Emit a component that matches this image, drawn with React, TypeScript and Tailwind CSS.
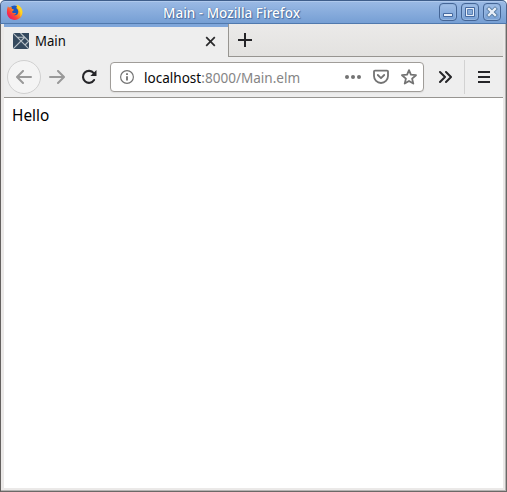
import React from 'react';

function FirefoxLogo() {
  return (
    <svg width="17" height="17" viewBox="0 0 17 17" className="block shrink-0">
      <defs>
        <linearGradient id="flame" x1="0.85" y1="0.1" x2="0.15" y2="0.8">
          <stop offset="0" stopColor="#ffe326" />
          <stop offset="0.4" stopColor="#ff9a1c" />
          <stop offset="0.75" stopColor="#ff4038" />
          <stop offset="1" stopColor="#ee2060" />
        </linearGradient>
      </defs>
      <circle cx="8.4" cy="7.4" r="6" fill="#1c57bd" />
      <path d="M1.9 2.2 3.2 3.8C4.2 3 5 3 5.8 3.3 5.4 4 5.6 4.7 6.3 5 8 5.3 8.5 6 7 6.7 6 7.4 5.9 8.3 6.7 8.8 7.8 9.6 9.3 8.5 10 9.3 9.5 10.4 8.3 10.9 7.3 10.8 9.8 12.3 12.5 10.6 12.3 7.6 12.2 5.6 11 4.8 10.2 4.1 10.9 3.1 11.2 2 10.6.8c3.3 1 5.9 3.8 5.9 7.5 0 4.3-3.3 7.6-7.7 7.6-4.6 0-7.9-3.3-7.9-7.7C.9 6 1.2 4 1.9 2.2Z" fill="url(#flame)" />
      <path d="M10.6.8c3.2 1 5.6 3.8 5.6 7 .1 2-1 4.2-1.9 5.1.6-3 .2-5.6-1.4-7.5C12.2 4.5 11.3 3 10.6.8Z" fill="#ffd823" />
    </svg>
  );
}

function ElmIcon() {
  return (
    <svg width="16" height="16" viewBox="0 0 16 16" className="block shrink-0">
      <path fill="#34495e" d="M0 0h16v16H0z" />
      <path d="M0 0 16 16M0 16 12 4M7.5 0 16 8.5M4.3 4.3h7.5M12 12l4-4" fill="none" stroke="#b9c2c8" strokeWidth="1.1" />
    </svg>
  );
}

function WindowButton({ kind }: { kind: 'min' | 'max' | 'close' }) {
  return (
    <button className="block h-[18px] w-[18px] rounded-[4px] border border-[#446596] bg-linear-to-b from-[#a0bee7] to-[#77a0d5] shadow-[inset_0_0_0_1px_#94b5df]">
      <svg width="16" height="16" viewBox="0 0 16 16" className="block">
        {kind === 'min' && <path d="M3.5 9.5h9v3h-9z" fill="#eaf0f8" stroke="#45699f" />}
        {kind === 'max' && (
          <g>
            <path d="M3.5 3.5h9v9h-9z" fill="#e6edf7" stroke="#45699f" />
            <path d="M5.5 5.5h5v5h-5z" fill="#86abd9" stroke="#5c82b7" />
          </g>
        )}
        {kind === 'close' && (
          <g fill="none" strokeLinecap="square">
            <path d="m5 5 6 6m0-6-6 6" stroke="#55799f" strokeWidth="4" />
            <path d="m5 5 6 6m0-6-6 6" stroke="#e9eff8" strokeWidth="2.4" />
          </g>
        )}
      </svg>
    </button>
  );
}

function TitleBar() {
  return (
    <header className="relative flex h-6 shrink-0 items-center rounded-t-[5px] border border-t-[#3f5e8b] border-r-[#4a6289] border-b-[#5079ad] border-l-[#4a6289] bg-linear-to-b from-[#9bbae5] to-[#769fd4] pr-[5px] pl-[5px] shadow-[inset_0_1px_0_#afc9ed]">
      <FirefoxLogo />
      <h1 className="ml-[140px] w-[142px] origin-left scale-x-[0.966] pt-px text-[14px] leading-[22px] font-medium whitespace-nowrap text-white [text-shadow:0_0_1px_#365b91,1px_1px_1px_#456ba2]">
        Main - Mozilla Firefox
      </h1>
      <div className="ml-auto flex gap-1">
        <WindowButton kind="min" />
        <WindowButton kind="max" />
        <WindowButton kind="close" />
      </div>
    </header>
  );
}

function TabStrip() {
  return (
    <div className="flex h-[33px] shrink-0">
      <div className="flex w-[224px] items-center border-t-[3px] border-[#7fa6da] bg-[#eeeeee] pr-[12px] pb-[2px] pl-[9px]">
        <ElmIcon />
        <span className="ml-[6px] text-[14px] leading-5">
          <span className="inline-block origin-left scale-x-[0.94]">Main</span>
        </span>
        <svg width="11" height="11" viewBox="0 0 11 11" className="ml-auto">
          <path d="m1.2 1.2 8.6 8.6m0-8.6L1.2 9.8" fill="none" stroke="#29292b" strokeWidth="1.7" />
        </svg>
      </div>
      <div className="flex flex-1 border-b border-l border-[#979591] bg-linear-to-b from-[#ebeae9] to-[#e3e2e0] pt-[9px] pl-[9px]">
        <svg width="14" height="14" viewBox="0 0 14 14">
          <path d="M7 0v14M0 7h14" fill="none" stroke="#242427" strokeWidth="2" />
        </svg>
      </div>
    </div>
  );
}

function AddressBar() {
  return (
    <div className="ml-[13px] flex h-[30px] w-[314px] shrink-0 items-center rounded-[4px] border border-[#a09d99] bg-white pr-[6px] pl-[9px] shadow-[0_1px_1px_#dedede]">
      <svg width="14" height="14" viewBox="0 0 14 14" fill="none" className="shrink-0">
        <circle cx="7" cy="7" r="6.4" stroke="#737373" strokeWidth="1.15" />
        <path d="M7 6.2v4.4M7 3.2v1.7" stroke="#686868" strokeWidth="1.7" />
      </svg>
      <div className="ml-[10px] w-[191px] pt-[2px] text-[14px] leading-5 whitespace-nowrap text-[#858585]">
        <span className="inline-block origin-left scale-x-[0.968]"><span className="text-[#080808]">localhost</span>:8000/Main.elm</span>
      </div>
      <svg width="16" height="16" viewBox="0 0 16 16" className="ml-[10px] shrink-0" fill="#737373">
        <circle cx="2" cy="8" r="2" /><circle cx="8" cy="8" r="2" /><circle cx="14" cy="8" r="2" />
      </svg>
      <svg width="16" height="16" viewBox="0 0 16 16" className="ml-[12px] shrink-0" fill="none" stroke="#737373" strokeWidth="1.8" strokeLinecap="round" strokeLinejoin="round">
        <path d="M2 1.6h12a1 1 0 0 1 1 1V7a7 7 0 0 1-14 0V2.6a1 1 0 0 1 1-1Z" />
        <path d="m4.8 6 3.2 3.2L11.2 6" />
      </svg>
      <svg width="16" height="16" viewBox="0 0 16 16" className="ml-[12px] shrink-0" fill="none" stroke="#737373" strokeWidth="1.8" strokeLinejoin="round">
        <path d="m8 1.2 1.9 4.5 5.1.5-3.9 3.4 1.2 5L8 12l-4.3 2.6 1.2-5L1 6.2l5.1-.5Z" />
      </svg>
    </div>
  );
}

function Toolbar() {
  return (
    <nav className="flex h-[41px] shrink-0 items-center border-b border-[#979591] bg-[#eeeeee] pl-[3px] text-[#252528]">
      <button className="flex h-[34px] w-[34px] shrink-0 items-center justify-center rounded-full border border-[#d0d0d0] bg-[#f4f4f4]">
        <svg width="16" height="14" viewBox="0 0 16 14" fill="none" stroke="#999" strokeWidth="2" strokeLinecap="round" strokeLinejoin="round">
          <path d="M15 7H1.3M7 1 1 7l6 6" />
        </svg>
      </button>
      <svg width="16" height="14" viewBox="0 0 16 14" className="ml-[8px] shrink-0" fill="none" stroke="#999" strokeWidth="2" strokeLinecap="round" strokeLinejoin="round">
        <path d="M1 7h13.7M9 1l6 6-6 6" />
      </svg>
      <svg width="16" height="16" viewBox="0 0 16 16" className="ml-[16px] shrink-0" fill="none" stroke="currentColor" strokeWidth="2.1">
        <path d="M12.7 4.1A6 6 0 1 0 13.1 11" strokeLinecap="round" />
        <path d="M15.5 1v6H9.3Z" fill="currentColor" stroke="none" />
      </svg>
      <AddressBar />
      <svg width="14" height="14" viewBox="0 0 14 14" className="ml-[14px] shrink-0" fill="none" stroke="currentColor" strokeWidth="2" strokeLinecap="round" strokeLinejoin="round">
        <path d="m2 2 5 5-5 5M8 2l5 5-5 5" />
      </svg>
      <span className="ml-[12px] h-[34px] w-px bg-[#d2d2d2]" />
      <svg width="12" height="12" viewBox="0 0 12 12" className="ml-[13px] shrink-0">
        <path d="M0 1h12M0 6h12M0 11h12" stroke="currentColor" strokeWidth="2" />
      </svg>
    </nav>
  );
}

export default function App() {
  return (
    <div className="relative flex h-[492px] w-[507px] flex-col overflow-hidden bg-white font-['Noto_Sans','Open_Sans',sans-serif] text-[#0b0b0b]">
      <TitleBar />
      <div className="flex min-h-0 flex-1 flex-col border-r border-b border-l border-r-[#6b6967] border-b-[#6b6967] border-l-[#64615f] bg-[#ebe9e8] pr-[3px] pb-[3px] pl-[3px] shadow-[inset_-1px_-1px_0_#b5b3b2]">
        <TabStrip />
        <Toolbar />
        <main className="flex-1 bg-white px-2 pt-[5px] text-[16px] leading-6 text-black">
          <span className="inline-block origin-left scale-x-[0.96]">Hello</span>
        </main>
      </div>
    </div>
  );
}
